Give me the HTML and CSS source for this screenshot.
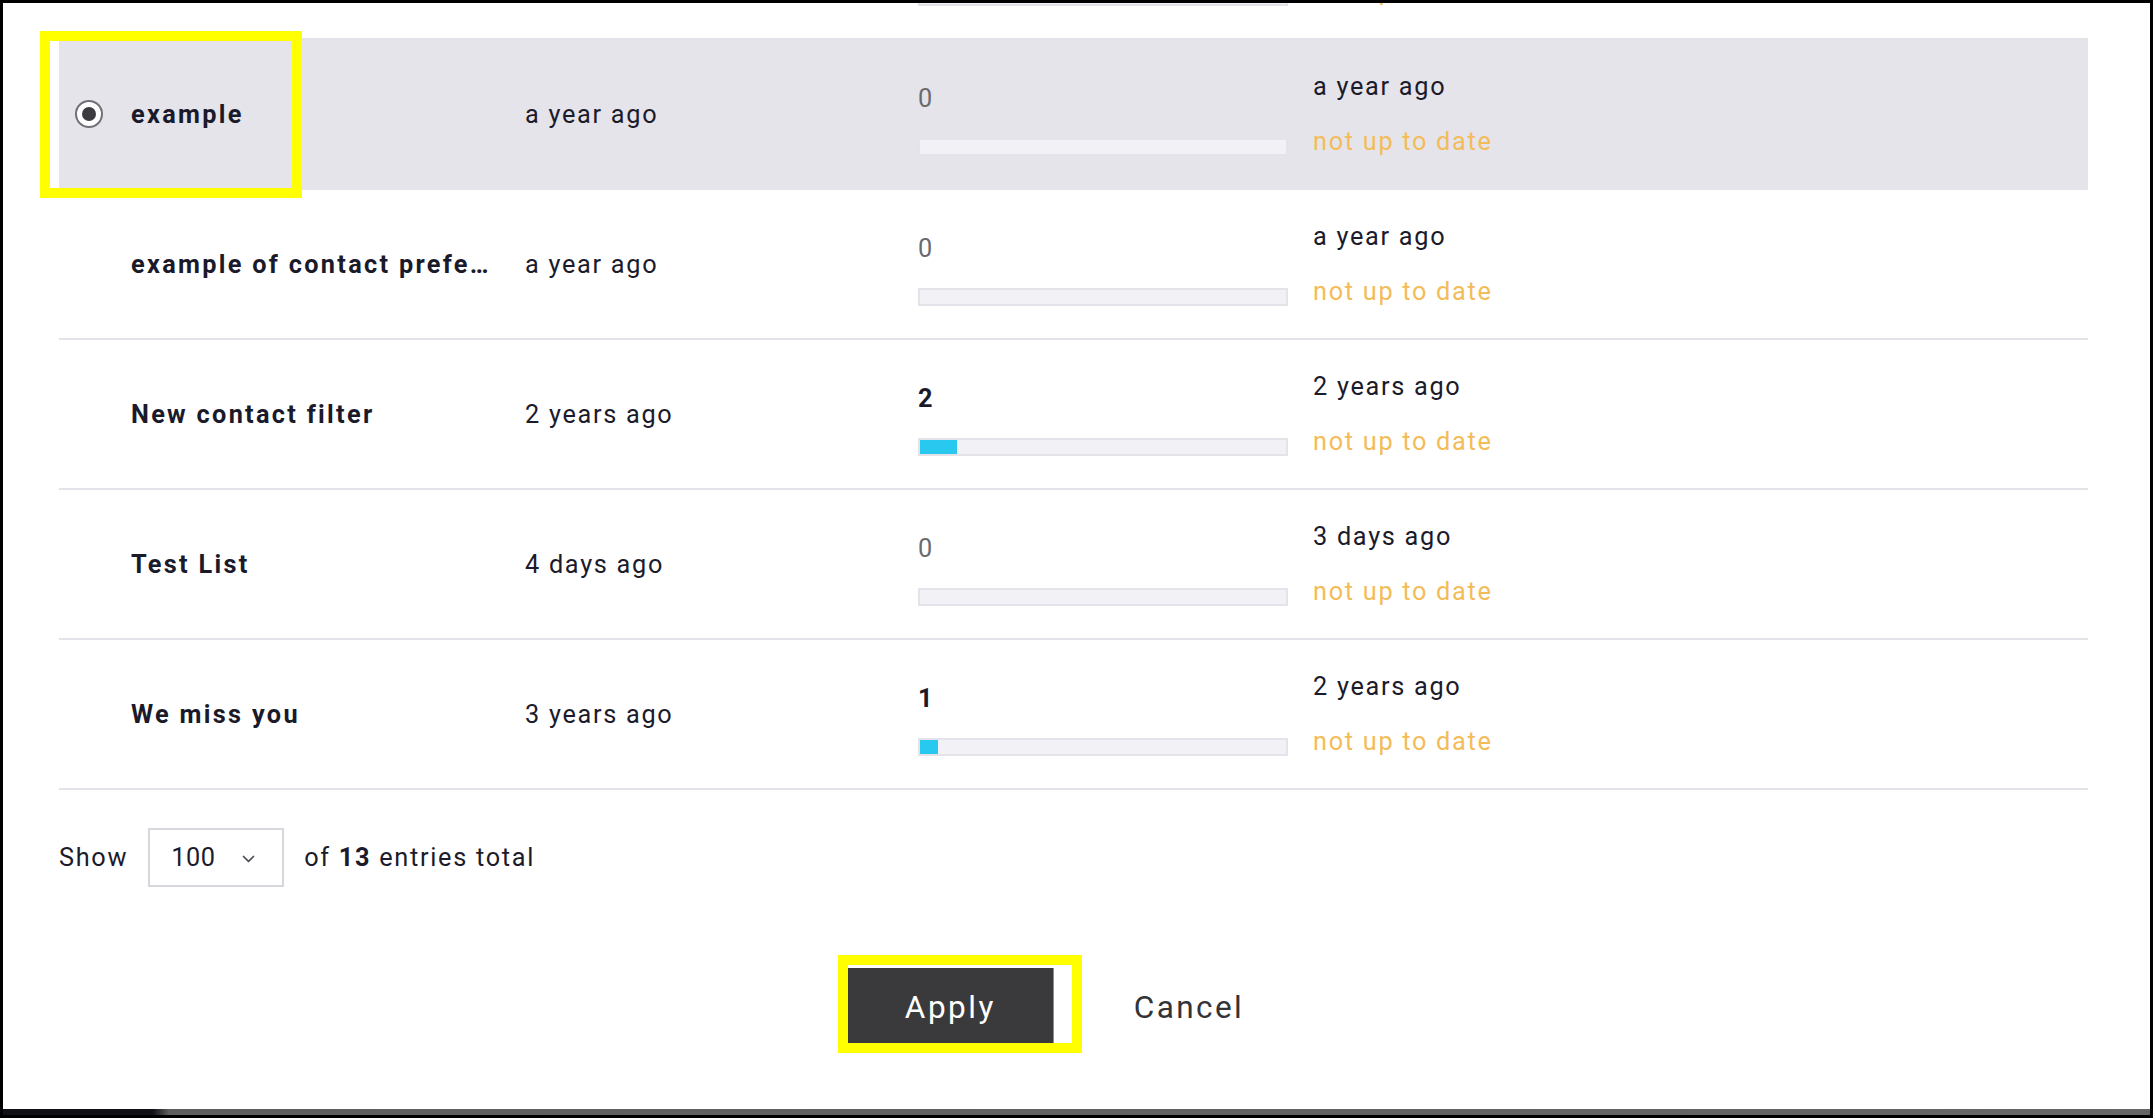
FILE: index.html
```html
<!DOCTYPE html>
<html lang="en">
<head>
<meta charset="utf-8">
<title>Lists</title>
<link rel="stylesheet" href="styles.css">
</head>
<body>
<div class="frame">
  <div class="content">
    <div class="list">
      <div class="row">
        <div class="cell cell-radio"></div>
        <div class="cell cell-name"></div>
        <div class="cell cell-date"></div>
        <div class="cell cell-progress">
          <div class="count spacer"></div>
          <div class="bar"><div class="fill" style="width:0%"></div></div>
        </div>
        <div class="cell cell-status">
          <div class="spacer"></div>
          <div class="state">not up to date</div>
        </div>
      </div>

      <div class="row selected">
        <div class="cell cell-radio"><span class="radio"><span class="radio-dot"></span></span></div>
        <div class="cell cell-name">example</div>
        <div class="cell cell-date">a year ago</div>
        <div class="cell cell-progress">
          <div class="count zero">0</div>
          <div class="bar"><div class="fill" style="width:0%"></div></div>
        </div>
        <div class="cell cell-status">
          <div class="updated">a year ago</div>
          <div class="state">not up to date</div>
        </div>
        <span class="highlight highlight-row"></span>
      </div>

      <div class="row">
        <div class="cell cell-radio"></div>
        <div class="cell cell-name">example of contact prefe…</div>
        <div class="cell cell-date">a year ago</div>
        <div class="cell cell-progress">
          <div class="count zero">0</div>
          <div class="bar"><div class="fill" style="width:0%"></div></div>
        </div>
        <div class="cell cell-status">
          <div class="updated">a year ago</div>
          <div class="state">not up to date</div>
        </div>
      </div>

      <div class="row">
        <div class="cell cell-radio"></div>
        <div class="cell cell-name">New contact filter</div>
        <div class="cell cell-date">2 years ago</div>
        <div class="cell cell-progress">
          <div class="count">2</div>
          <div class="bar"><div class="fill" style="width:10%"></div></div>
        </div>
        <div class="cell cell-status">
          <div class="updated">2 years ago</div>
          <div class="state">not up to date</div>
        </div>
      </div>

      <div class="row">
        <div class="cell cell-radio"></div>
        <div class="cell cell-name">Test List</div>
        <div class="cell cell-date">4 days ago</div>
        <div class="cell cell-progress">
          <div class="count zero">0</div>
          <div class="bar"><div class="fill" style="width:0%"></div></div>
        </div>
        <div class="cell cell-status">
          <div class="updated">3 days ago</div>
          <div class="state">not up to date</div>
        </div>
      </div>

      <div class="row">
        <div class="cell cell-radio"></div>
        <div class="cell cell-name">We miss you</div>
        <div class="cell cell-date">3 years ago</div>
        <div class="cell cell-progress">
          <div class="count">1</div>
          <div class="bar"><div class="fill" style="width:5%"></div></div>
        </div>
        <div class="cell cell-status">
          <div class="updated">2 years ago</div>
          <div class="state">not up to date</div>
        </div>
      </div>
    </div>

    <div class="pager">
      <span>Show</span>
      <div class="select">
        <span>100</span>
        <svg class="chevron" width="13" height="8" viewBox="0 0 13 8"><polyline points="1.5,1.5 6.5,6.3 11.5,1.5" fill="none" stroke="#4a4a52" stroke-width="1.7" stroke-linecap="round" stroke-linejoin="round"/></svg>
      </div>
      <span>of <b>13</b> entries total</span>
    </div>

    <div class="actions">
      <div class="apply-wrap">
        <button class="btn-apply" type="button">Apply</button>
        <span class="highlight highlight-btn"></span>
      </div>
      <button class="btn-cancel" type="button">Cancel</button>
    </div>
  </div>
  <div class="hscroll"></div>
</div>
</body>
</html>
```

FILE: styles.css
```css
* {
  box-sizing: border-box;
}

html,
body {
  margin: 0;
  padding: 0;
  height: 100%;
  overflow: hidden;
  background: #ffffff;
}

body {
  font-family: Roboto, "Noto Sans", "Liberation Sans", sans-serif;
  font-size: 25.3px;
  color: #1c1b2b;
}

.frame {
  height: 1118px;
  border: 3px solid #000000;
  display: flex;
  flex-direction: column;
  overflow: hidden;
  background: #ffffff;
}

.content {
  flex: 1;
  overflow: hidden;
  padding: 0 62px 0 56px;
}

.list {
  margin-top: -113px;
}

.row {
  position: relative;
  display: flex;
  align-items: center;
  height: 150px;
  border-bottom: 2px solid #e4e3ea;
}

.row.selected {
  background: #e5e4ea;
  border-bottom-color: #e5e4ea;
}

.cell {
  line-height: 28px;
  letter-spacing: 1.7px;
}

.cell-radio {
  width: 72px;
  flex-shrink: 0;
  padding-left: 16px;
  display: flex;
  align-items: center;
}

.radio {
  width: 28px;
  height: 28px;
  border-radius: 50%;
  border: 2px solid #707078;
  background: #ffffff;
  display: flex;
  align-items: center;
  justify-content: center;
}

.radio-dot {
  width: 14px;
  height: 14px;
  border-radius: 50%;
  background: #3b3b40;
}

.cell-name {
  width: 393px;
  flex-shrink: 0;
  padding-right: 20px;
  padding-top: 1.5px;
  font-weight: 700;
  letter-spacing: 2.3px;
  white-space: nowrap;
  overflow: hidden;
  color: #1a1a2a;
}

.cell-date {
  width: 394px;
  flex-shrink: 0;
  padding-top: 1.5px;
  padding-left: 1px;
  white-space: nowrap;
}

.cell-progress {
  width: 395px;
  flex-shrink: 0;
  align-self: flex-start;
  padding-top: 45px;
}

.count {
  font-weight: 700;
  margin-bottom: 25px;
  color: #1a1a2a;
}

.count.zero {
  font-weight: 400;
  color: #6a6a6e;
}

.spacer {
  height: 28px;
}

.bar {
  width: 370px;
  height: 18px;
  border: 2px solid #e4e3ea;
  background: #f2f2f6;
}

.fill {
  height: 100%;
  background: #29c8ee;
}

.cell-status {
  flex: 1;
  display: flex;
  flex-direction: column;
  gap: 27px;
  white-space: nowrap;
}

.state {
  color: #f3bc58;
}

.highlight {
  position: absolute;
  border: 10px solid #ffff00;
  pointer-events: none;
}

.highlight-row {
  left: -19px;
  top: -9px;
  width: 262px;
  height: 167px;
}

.pager {
  display: flex;
  align-items: center;
  gap: 20px;
  margin-top: 38px;
  height: 59px;
  letter-spacing: 1.7px;
  color: #1c1b2b;
}

.pager b {
  font-weight: 700;
}

.select {
  width: 136px;
  height: 59px;
  border: 2px solid #d6d6dc;
  padding-left: 21px;
  display: flex;
  align-items: center;
  letter-spacing: 0.6px;
}

.chevron {
  margin-left: 26px;
  margin-top: 2px;
}

.actions {
  display: flex;
  justify-content: center;
  align-items: center;
  gap: 17px;
  margin-top: 81px;
  padding-left: 9px;
}

.apply-wrap {
  position: relative;
}

.btn-apply {
  display: block;
  width: 205px;
  height: 75px;
  border: none;
  background: #3a3a3c;
  color: #ffffff;
  font-family: Roboto, "Noto Sans", "Liberation Sans", sans-serif;
  font-size: 31.5px;
  letter-spacing: 2.5px;
  box-shadow: 1px 0 0 #8f8f8f;
  padding: 3px 0 0 0;
}

.highlight-btn {
  left: -10px;
  top: -13px;
  width: 244px;
  height: 98px;
}

.btn-cancel {
  height: 75px;
  border: none;
  background: none;
  padding: 3px 64px 0 64px;
  color: #333338;
  font-family: Roboto, "Noto Sans", "Liberation Sans", sans-serif;
  font-size: 31.5px;
  letter-spacing: 2.4px;
}

.hscroll {
  flex-shrink: 0;
  height: 6px;
  background: linear-gradient(to right, #111118 0, #111118 150px, #5e5e5e 166px, #666666 100%);
}
```
